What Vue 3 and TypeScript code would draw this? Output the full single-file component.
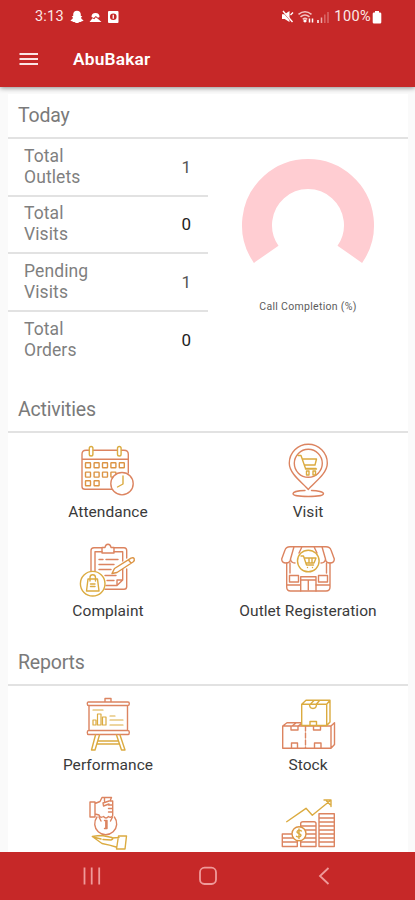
<script setup lang="ts">
interface Stat { label: string[]; value: number }
interface Tile { id: string; label: string }
interface Section { title: string; tiles: Tile[] }

const stats: Stat[] = [
  { label: ['Total', 'Outlets'], value: 1 },
  { label: ['Total', 'Visits'], value: 0 },
  { label: ['Pending', 'Visits'], value: 1 },
  { label: ['Total', 'Orders'], value: 0 },
]

const sections: Section[] = [
  {
    title: 'Activities',
    tiles: [
      { id: 'attendance', label: 'Attendance' },
      { id: 'visit', label: 'Visit' },
      { id: 'complaint', label: 'Complaint' },
      { id: 'outlet', label: 'Outlet Registeration' },
    ],
  },
  {
    title: 'Reports',
    tiles: [
      { id: 'performance', label: 'Performance' },
      { id: 'stock', label: 'Stock' },
      { id: 'payment', label: '' },
      { id: 'growth', label: '' },
    ],
  },
]

const dayRows = [
  { y: 24.3, xs: [10, 18.6, 27, 35.4, 43.8] },
  { y: 33.6, xs: [10, 18.6, 27, 35.4] },
  { y: 42.3, xs: [10, 18.6] },
]
</script>

<template>
  <div class="screen">
    <header class="top">
      <div class="status">
        <span class="clock">3:13</span>
        <svg class="s-left" viewBox="0 0 52 16" width="52" height="16">
          <g fill="#fff">
            <path d="M7 1.800c2.400 0 3.800 1.600 3.800 3.800v1.300l1.500.3-1.300 1.500c.4 1.300 1.200 2 2.500 2.500-.3.900-1.300.9-1.900 1.100-.3.900-1.100.5-1.900.6-.9.200-1.300 1.200-2.700 1.200s-1.800-1-2.700-1.200c-.8-.1-1.600.3-1.900-.6-.6-.2-1.600-.2-1.900-1.100 1.300-.5 2.100-1.200 2.500-2.500L1.700 7.200l1.500-.3V5.600c0-2.200 1.400-3.800 3.800-3.800z" />
            <path d="M19.500 13l3-3.800 1.800 1 1.500-2 2.300 1.800 3.400 3z" />
            <path d="M21.500 8a4 4 0 0 1 8 0l-1.500.8-2.200-1.800-2 2z" />
            <path fill-rule="evenodd" d="M39 2h8.500q1 0 1 1v10q0 1-1 1H39q-1 0-1-1V3q0-1 1-1zm4.300 2.500a3.300 3.300 0 1 0 0 6.600 3.300 3.300 0 0 0 0-6.600z" />
            <path d="M42.600 5.800h1.300v4h-1.300z" />
          </g>
        </svg>
        <span class="grow"></span>
        <svg class="s-right" viewBox="0 0 50 16" width="50" height="16">
          <path d="M0 5.300h2.600L7.500 2v11L2.600 10H0z" fill="#fff" />
          <path d="M.5 2l9.500 11" stroke="#c62828" stroke-width="1.300" />
          <path d="M1 2l9.500 11M8.500 6l2.500-2.500" stroke="#fff" stroke-width="1.400" fill="none" />
          <g fill="none" stroke="#f3c4c4" stroke-width="1.600">
            <path d="M16.500 5.300q6.500-5 13 0M18.500 7.800q4.500-3.500 9 0M20.800 10.300q2.200-1.800 4.400 0" />
          </g>
          <path d="M23 10.300l2 1.700-2 1.700-2-1.700z" fill="#fff" />
          <path d="M27.500 13.500V9.500M30.500 9.500V13.500" stroke="#fff" stroke-width="1.500" />
          <path d="M36 11v3" stroke="#fff" stroke-width="1.500" />
          <path d="M39.500 8.500V14" stroke="#eda9a9" stroke-width="1.500" />
          <path d="M42.800 5.500V14M46 3v11" stroke="#d96868" stroke-width="1.500" />
        </svg>
        <span class="battery-text">100%</span>
        <svg viewBox="0 0 10 16" width="10" height="16">
          <path d="M3 2h4v1.500h1q1.300 0 1.300 1.300v8.400q0 1.300-1.300 1.300H2Q.7 14.500.7 13.200V4.800Q.7 3.500 2 3.500h1z" fill="#fff" />
        </svg>
      </div>
      <div class="bar">
        <svg viewBox="0 0 20 14" width="20" height="14">
          <path d="M.5 2h18.500M.5 7h18.500M.5 12h18.500" stroke="#fbe5e5" stroke-width="2" />
        </svg>
        <h1>AbuBakar</h1>
      </div>
    </header>

    <main class="content">
      <section class="card today">
        <h2>Today</h2>
        <div class="summary">
          <div class="stats">
            <div v-for="(s, i) in stats" :key="i" class="stat">
              <div class="stat-label">
                <span v-for="w in s.label" :key="w">{{ w }}</span>
              </div>
              <span class="stat-value" :class="{ zero: s.value === 0 }">{{ s.value }}</span>
            </div>
          </div>
          <div class="gauge">
            <svg viewBox="0 0 140 110" width="140" height="110">
              <path d="M28.200 99.300A51 51 0 1 1 111.800 99.300" fill="none" stroke="#ffcdd2" stroke-width="30" />
            </svg>
            <span>Call Completion (%)</span>
          </div>
        </div>
      </section>

      <section v-for="sec in sections" :key="sec.title" class="card group">
        <h2>{{ sec.title }}</h2>
        <div class="tiles">
          <div v-for="t in sec.tiles" :key="t.id" class="tile">
            <svg viewBox="0 0 60 60" width="60" height="60" class="icon">
              <g v-if="t.id === 'attendance'">
                <path class="o" d="M11 9.300H8Q4 9.300 4 13.300V45.500Q4 48.300 7 48.300H34M15.500 9.300H39M43.500 9.300H46Q50.300 9.300 50.300 13.300V32M4 18.300H50.300" />
                <rect class="g" x="11.300" y="5.500" width="3.600" height="9.500" rx="1.800" />
                <rect class="g" x="39.500" y="5.500" width="3.600" height="9.500" rx="1.800" />
                <template v-for="r in dayRows" :key="r.y">
                  <rect v-for="x in r.xs" :key="x" class="a" :x="x - 2.500" :y="r.y - 2.500" width="5" height="5" rx=".5" />
                </template>
                <circle class="o w" cx="44" cy="42.700" r="11.200" />
                <path class="g" d="M45 35V43L39.500 46" />
              </g>
              <g v-else-if="t.id === 'visit'">
                <path class="o" d="M30.300 48.500C25 42 11.300 33 11.300 22.300A19 19 0 0 1 49.300 22.300C49.300 33 35.500 42 30.300 48.500Z" />
                <circle class="o" cx="30.300" cy="22.300" r="14" />
                <path class="o" d="M27 49.500C20 49.500 15 51 15 52.700S22 55.500 30.300 55.500 45.500 54.300 45.500 52.700 40 49.500 33.500 49.500" />
                <path class="g" d="M20 14.500H23L27.500 27.500H38M25 18H38.500L37 24H27M28.500 30V34H31V30ZM35 30V34H37.500V30ZM27.500 28H38.500" />
              </g>
              <g v-else-if="t.id === 'complaint'">
                <path class="o" d="M13 31V10.500Q13 7.700 16 7.700H24M36 7.700H46Q48.700 7.700 48.700 10.500V18M48.700 29V46.500Q48.700 49.300 46 49.300H27" />
                <path class="o" d="M17 31V11.700H24M36 11.700H44.700V21M44.700 29V40L39 45.500H28M39 45V40H44" />
                <path class="o" d="M24 13V7.500H27Q27.500 4.300 30 4.300T33 7.500H36V13Z" />
                <path class="o" d="M21 19.500H25M28 19.500H40M21 24.500H36M21 29.500H33M27 35.500H38M29 40.500H36" />
                <path class="a w" d="M34 33.500L36.500 28.500 53 18.200Q55.500 17 56.200 18.800T55 22L39 32.500ZM50.500 20L53 23" />
                <circle class="g w" cx="14.700" cy="43.700" r="12.300" />
                <path class="g" d="M10 39H19.500L21 51H8.500ZM12 41V37.500Q12 34.800 14.700 34.800T17.500 37.500V41M12.500 44H17M12.500 46.500H17" />
              </g>
              <g v-else-if="t.id === 'outlet'">
                <path class="o" d="M20 6.700H12Q8 6.700 7 10L3.700 19Q3.700 23 8 23T12.500 19Q13 23 17 23M16 6.700L12.500 19M24 6.700L21 13M40 6.700H48Q52 6.700 53 10L56.300 19Q56.300 23 52 23T47.500 19Q47 23 43 23M44 6.700L47.500 19M36 6.700L39 13M20 6.700H40" />
                <path class="o" d="M8.700 23V47Q8.700 51 12.500 51H48Q52 51 52 47V23M12 23V33M48.500 23V33M9 45H22M38 45H52" />
                <rect class="o" x="11.500" y="35.500" width="9" height="6.500" />
                <rect class="o" x="40.500" y="35.500" width="9" height="6.500" />
                <path class="o" d="M22.700 51V36.700H38V51M22.700 40H38M30.300 40V50" />
                <circle class="g w" cx="30.300" cy="21" r="10.800" />
                <path class="g" d="M23 16H25.500L28.500 25H35.500M26.500 18H38L36 23H28M29.500 27.500V27.600M34.500 27.500V27.600M31 18V23M34 18V23" />
              </g>
              <g v-else-if="t.id === 'performance'">
                <path class="o" d="M27 8V4.500H33V8M10.500 8H50Q51.300 8 51.300 9.700T50 11.500H10.500Q9.300 11.500 9.300 9.700T10.500 8ZM11 11.500V36.500M49.500 11.500V36.500M10.500 36.500H50Q51.300 36.500 51.300 38.500T50 40.500H10.500Q9.300 40.500 9.300 38.500T10.500 36.500Z" />
                <path class="g" d="M17.500 41L13.500 56H17L21.500 41M42 41L47 56H43.500L38.500 41M20 47H40.500M19 50H41.500" />
                <path class="g thin" d="M15 31V26H18V31ZM19.500 31V20H23V31ZM24.500 31V23H28V31ZM15 16H25M32 22H37M32 26H45M32 31H45" />
              </g>
              <g v-else-if="t.id === 'stock'">
                <path class="o" d="M4.700 32H53V54.300H4.700ZM4.700 32L9 28.700H23M53 32L56.500 28.700V50.500L53 54.300M13 32V36H20V32M35.500 32V36H42.500V32M13.500 54.300V49H19.500V54.300M36.500 54.300V49H43V54.300M14 32L18 29M20 32L23 30" />
                <path class="o dash" d="M27.500 32V54" />
                <path class="g" d="M23.700 10.300H48.700V31.500H23.700ZM23.700 10.300L28 6.300H52L48.700 10.300M52 6.300V28L48.700 31.500M31.500 10.300Q31.500 14.500 35 14.500T38.500 10.300M32.500 10L36 6.500M38.500 10L41.500 6.500M32 31.500V27.500H38.500V31.500" />
              </g>
              <g v-else-if="t.id === 'payment'">
                <path class="o" d="M12 9H17V24H12ZM17 10.500L22 8.500 24 4.500H33.500L32 8H34.700V22.500Q33 25.500 30.500 23.500 28 26.500 25.500 23.500 22 25.500 21 22L17 21M31 8L25 10L25.500 13 31 11M30.500 12H34.500M30.500 15.500H34.500M30.500 19H34.500M26.500 5V8" />
                <path class="o" d="M19 24A11 11 0 1 0 36.400 24M21 24L23 28M34.500 24L32.500 28" />
                <path class="o" d="M26.500 27.500H29V35.500H26.500M27.800 27.500V35.500" />
                <path class="g" d="M14.300 43.500Q20 42.500 24 42.500L34 44.500Q36 46 33 47L25 46.500M14.300 43.500L24 50.500Q32 52 38 54M34 45L41 44.500M40.500 43H48.500L47 56H38.500ZM15 44L23 46" />
              </g>
              <g v-else>
                <path class="g" d="M8.700 28.700L28 15.300 34.300 22.300 52.700 7.300M46 7H53V13.500M48.500 8L52 11.500" />
                <path class="o" d="M4.300 41H19.300V53.500H4.300ZM4.300 45H19M4.300 49H19M22.700 53.500V30.500Q22.700 28.700 25 28.700H36Q38 28.700 38 30.500V53.500ZM22.700 33H38M22.700 37H38M22.700 41H38M22.700 45H38M22.700 49H38M41 20.700H56.300V53.500H41ZM41 25H56.300M41 29H56.300M41 33H56.300M41 37H56.300M41 41H56.300M41 45H56.300M41 49H56.300" />
                <circle class="a w" cx="21" cy="40.700" r="7" />
                <path class="g" d="M23.500 38Q21 36.500 19.500 38T21 40.700 22.500 43.300 18.500 43.300M21 36V45.500" />
              </g>
            </svg>
            <span class="tile-label">{{ t.label }}</span>
          </div>
        </div>
      </section>
    </main>

    <nav class="nav">
      <svg viewBox="0 0 20 20" width="20" height="20"><path d="M2.500 1.500V18.500M9.700 1.500V18.500M17.200 1.500V18.500" /></svg>
      <svg viewBox="0 0 20 20" width="20" height="20"><rect x="2" y="1.700" width="16" height="16.300" rx="4.500" /></svg>
      <svg viewBox="0 0 20 20" width="20" height="20"><path d="M14.500 2L6 10 14.500 18" /></svg>
    </nav>
  </div>
</template>

<style>
body { background: #fafafa; overflow: hidden; }
</style>

<style scoped>
.screen {
  width: 415px;
  height: 900px;
  display: flex;
  flex-direction: column;
  overflow: hidden;
  background: #fafafa;
  font-family: Roboto, "Liberation Sans", sans-serif;
}
.top {
  flex: 0 0 87px;
  background: #c62828;
  color: #fff;
  box-shadow: 0 1px 5px rgba(0, 0, 0, .45);
  z-index: 1;
}
.status {
  display: flex;
  align-items: center;
  height: 33px;
  padding: 0 33px 0 35px;
  color: #fbe9e7;
}
.clock { width: 30px; font-size: 14.500px; letter-spacing: .2px; }
.s-left { margin-left: 5px; }
.grow { flex: 1; }
.battery-text { margin: 0 1px 0 2px; font-size: 14.500px; letter-spacing: .4px; }
.bar { display: flex; align-items: center; height: 52px; padding-left: 19px; }
h1 { margin: 0 0 0 34px; font-size: 17.300px; font-weight: 600; letter-spacing: .2px; }
.content { flex: 1; min-height: 0; overflow: hidden; padding: 7px 7px 0 8px; }
.card { background: #fff; }
h2 {
  box-sizing: border-box;
  height: 45px;
  margin: 0;
  padding: 0 10px;
  border-bottom: 2px solid #e2e2e2;
  color: #7a7a7a;
  font-size: 19.500px;
  font-weight: 400;
  line-height: 44px;
  letter-spacing: -.2px;
}
.today { height: 294px; }
.summary { display: flex; }
.stats { width: 200px; }
.stat {
  display: flex;
  justify-content: space-between;
  align-items: center;
  box-sizing: border-box;
  height: 57.500px;
  padding: 0 17px 0 16px;
  border-bottom: 2px solid #e2e2e2;
}
.stat:last-child { height: 56px; border-bottom: 0; }
.stat-label { display: flex; flex-direction: column; color: #7f7f7f; font-size: 17.500px; line-height: 21px; letter-spacing: .1px; }
.stat-value { color: #555; font-size: 17px; }
.stat-value.zero { color: #222; }
.gauge { flex: 1; display: flex; flex-direction: column; align-items: center; padding-top: 16px; }
.gauge span { margin-top: 35px; color: #5c5c5c; font-size: 10.500px; line-height: 13px; letter-spacing: .3px; }
.group { height: 253px; }
.tiles { display: grid; grid-template-columns: 1fr 1fr; grid-auto-rows: 99px; padding-top: 8px; }
.tile { display: flex; flex-direction: column; align-items: center; }
.tile-label { color: #3a3a3a; font-size: 15.500px; line-height: 22px; letter-spacing: .05px; }
.icon { display: block; }
.icon path, .icon rect, .icon circle { fill: none; stroke-width: 1.400; stroke-linejoin: round; stroke-linecap: round; }
.icon .o { stroke: #dc8460; }
.icon .a { stroke: #dc9444; }
.icon .g { stroke: #dbab40; }
.icon .w { fill: #fff; }
.icon .thin { stroke-width: 1.200; }
.icon .dash { stroke-dasharray: 5 2; }
.nav {
  flex: 0 0 48px;
  display: flex;
  justify-content: space-between;
  align-items: center;
  box-sizing: border-box;
  padding: 0 81px 0 82px;
  background: #c62828;
}
.nav svg { fill: none; stroke: #ef9a9a; stroke-width: 1.800; }
</style>
